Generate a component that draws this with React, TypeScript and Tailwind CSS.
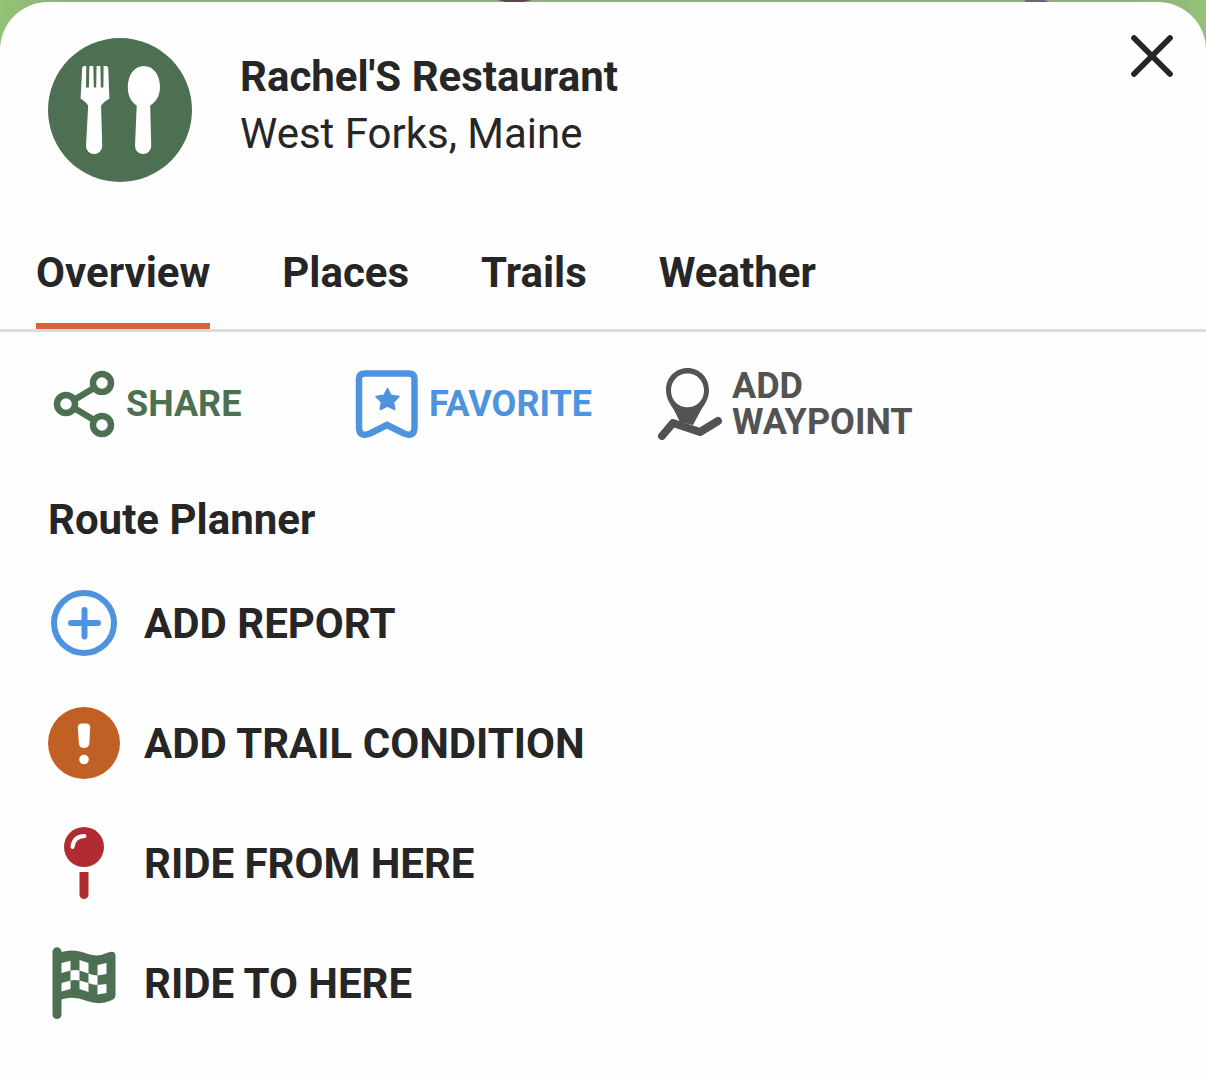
import React, { useState } from 'react';

const TABS = ['Overview', 'Places', 'Trails', 'Weather'];

const RestaurantIcon = () => (
  <svg viewBox="0 0 144 144" className="size-36 shrink-0" aria-hidden="true">
    <circle cx="72" cy="72" r="72" fill="#4c7051" />
    <g fill="#fff">
      <path d="M34.200 30Q34.500 28 36.200 28H58Q60 28 60.200 30L61.400 60.500Q55.500 64 53.100 67.500L54.200 108A8.100 8.100 0 0 1 38 108L40.200 67.500Q38 64 32.600 60.500Z" />
      <path d="M95.800 28C105.500 28 112 37 112 49C112 57.500 108 64 102.200 67.500L103.200 108A8.100 8.100 0 0 1 87 108L88.700 67.500C83 64 79.800 57.500 79.800 49C79.800 37 86.500 28 95.800 28Z" />
    </g>
    <path d="M38.300 27L38 49.500H40.900L41.400 27ZM45.300 27L45.800 49.500H48.200L48.600 27ZM52.400 27L52.800 49.500H55.400L55.600 27Z" fill="#4c7051" />
  </svg>
);

const ShareIcon = () => (
  <svg viewBox="0 0 72 72" className="size-18 shrink-0" fill="none" stroke="#4c7051" strokeWidth="6.500" aria-hidden="true">
    <path d="M26 32L46 20M26 40L46 52" />
    <circle cx="18" cy="36" r="9" />
    <circle cx="54" cy="15" r="9" />
    <circle cx="54" cy="57" r="9" />
  </svg>
);

const FavoriteIcon = () => (
  <svg viewBox="0 0 72 72" className="size-18 shrink-0" aria-hidden="true">
    <path d="M14 5.500H58Q63.500 5.500 63.500 11V60Q63 69.500 53 65.500L36 57L19 65.500Q8.500 69.500 8 60V11Q8 5.500 14 5.500Z" fill="none" stroke="#4e93dd" strokeWidth="6.500" />
    <path d="M36.500 20.500L40 27.300L48 28.500L42.500 34.200L43.800 41.500L36.500 38L29.200 41.500L30.500 34.200L25 28.500L33 27.300Z" fill="#4e93dd" stroke="#4e93dd" strokeWidth="1.500" strokeLinejoin="round" />
  </svg>
);

const WaypointIcon = () => (
  <svg viewBox="0 0 72 72" className="size-18 shrink-0" aria-hidden="true">
    <path fillRule="evenodd" d="M33.500 0C45.500 0 55 9.500 55 22C55 31 50.500 36.500 46.500 43L39 57L26 54L20.500 43C16.500 36.500 12 31 12 22C12 9.500 21.500 0 33.500 0ZM33.500 5.500C24 5.500 17 13 17 22.500C17 32 24 39.300 33.500 39.300C43 39.300 50 32 50 22.500C50 13 43 5.500 33.500 5.500Z" fill="#535353" />
    <path d="M8 68L19 55L46 64L64 53" fill="none" stroke="#535353" strokeWidth="8" strokeLinecap="round" strokeLinejoin="round" />
  </svg>
);

const AddReportIcon = () => (
  <svg viewBox="0 0 72 72" className="size-18 shrink-0" fill="none" stroke="#4e93dd" aria-hidden="true">
    <circle cx="36" cy="36" r="30" strokeWidth="6" />
    <path d="M23 36H50M36.500 23V49.500" strokeWidth="6" strokeLinecap="round" />
  </svg>
);

const TrailConditionIcon = () => (
  <svg viewBox="0 0 72 72" className="size-18 shrink-0" aria-hidden="true">
    <circle cx="36" cy="36" r="36" fill="#c06024" />
    <path d="M29.800 20.500Q30 16.500 34 16.500H38Q42.200 16.500 42.200 20.500L41.300 37Q40.500 41 36 41Q31.500 41 31 37Z" fill="#fff" />
    <circle cx="36" cy="52.500" r="4.800" fill="#fff" />
  </svg>
);

const RideFromIcon = () => (
  <svg viewBox="0 0 72 72" className="size-18 shrink-0" aria-hidden="true">
    <circle cx="36" cy="20" r="20" fill="#b02c30" />
    <path d="M24.500 20Q25.500 9.500 36.500 9" fill="none" stroke="#fff" strokeWidth="4" strokeLinecap="round" />
    <path d="M31.500 45H40.500V67.500A4.500 4.500 0 0 1 31.500 67.500Z" fill="#b02c30" />
  </svg>
);

const RideToIcon = () => (
  <svg viewBox="0 0 72 72" className="size-18 shrink-0" aria-hidden="true">
    <path d="M4.500 4.500A4.500 4.500 0 0 1 13.500 5Q26 1 40 7Q50 10.500 60 5.500Q67.500 3 67.500 9V48Q67.500 52 63 53.500Q52 58.500 39 54Q25 48.500 13.500 52.500V67.500A4.500 4.500 0 0 1 4.500 67.500Z" fill="#4c7051" />
    <g fill="#fff">
      <path d="M13.500 16L22.500 13.700V23.500L13.500 26Z" />
      <path d="M31.500 13L40.500 16V26.500L31.500 23.500Z" />
      <path d="M49.500 18L58.500 16V27L49.500 28.500Z" />
      <path d="M22.500 23.500Q27 22.500 31.500 23.500V33.500Q27 32.500 22.500 33.500Z" />
      <path d="M40.500 26.500Q45 28.500 49.500 28.500V38Q45 38 40.500 36Z" />
      <path d="M13.500 36L22.500 33.500V42L13.500 44.500Z" />
      <path d="M31.500 33.500L40.500 36V45L31.500 42Z" />
      <path d="M49.500 38L58.500 37V46L49.500 47.500Z" />
    </g>
  </svg>
);

const ROUTE_ACTIONS = [
  { label: 'ADD REPORT', Icon: AddReportIcon },
  { label: 'ADD TRAIL CONDITION', Icon: TrailConditionIcon },
  { label: 'RIDE FROM HERE', Icon: RideFromIcon },
  { label: 'RIDE TO HERE', Icon: RideToIcon },
];

const App: React.FC = () => {
  const [activeTab, setActiveTab] = useState('Overview');

  return (
    <div className="relative min-h-screen bg-[#94ad83] pt-0.5 font-['Roboto',sans-serif] text-[#262626] flex flex-col">
      {/* Map peeking out behind the sheet */}
      <div className="absolute inset-x-0 top-0 h-14 flex justify-between overflow-hidden">
        <div className="w-16 bg-linear-to-r from-[#92c474] to-[#94ad83]" />
        <svg viewBox="0 0 1000 4" className="h-1 flex-1" preserveAspectRatio="none" aria-hidden="true">
          <path d="M402 0H434L426 2H410Z" fill="#5d454b" />
          <path d="M891 0H910L914 2H892Z" fill="#6e6570" />
        </svg>
        <div className="w-16 bg-linear-to-l from-[#92c474] to-[#94ad83]" />
      </div>

      <main className="relative flex-1 bg-[#fefefe] rounded-t-[48px]">
        {/* Header */}
        <header className="flex items-start pl-12 pr-8 pt-9">
          <RestaurantIcon />
          <div className="flex-1 ml-12 mt-2.5 text-[42px] leading-[57px]">
            <h1 className="font-bold">Rachel'S Restaurant</h1>
            <p>West Forks, Maine</p>
          </div>
          <button type="button" aria-label="Close" className="-mt-1 cursor-pointer">
            <svg viewBox="0 0 44 44" className="size-11" fill="none" stroke="#262626" strokeWidth="5.700" strokeLinecap="round" aria-hidden="true">
              <path d="M4 4L40 40M40 4L4 40" />
            </svg>
          </button>
        </header>

        {/* Tabs */}
        <nav className="mt-10 px-9 flex gap-18 border-b-3 border-[#dcdcdc]">
          {TABS.map((tab) => (
            <button
              key={tab}
              type="button"
              onClick={() => setActiveTab(tab)}
              className={`pt-6 pb-6 text-[42px] leading-[53px] font-bold border-b-6 cursor-pointer ${activeTab === tab ? 'border-[#d9643a]' : 'border-transparent'}`}
            >
              {tab}
            </button>
          ))}
        </nav>

        {/* Quick actions */}
        <div className="pl-12 pt-9 grid grid-cols-[repeat(auto-fill,303px)] text-4xl leading-9 font-bold">
          <button type="button" className="flex items-center gap-1.5 text-left text-[#4c7051] cursor-pointer">
            <ShareIcon />
            SHARE
          </button>
          <button type="button" className="flex items-center gap-1.5 text-left text-[#4e93dd] cursor-pointer">
            <FavoriteIcon />
            FAVORITE
          </button>
          <button type="button" className="flex items-center gap-1.5 text-left text-[#535353] cursor-pointer">
            <WaypointIcon />
            ADD WAYPOINT
          </button>
        </div>

        {/* Route planner */}
        <section className="px-12 pt-12 pb-12 text-[42px] leading-[63px] font-bold">
          <h2>Route Planner</h2>
          <ul className="mt-9 flex flex-col gap-12">
            {ROUTE_ACTIONS.map(({ label, Icon }) => (
              <li key={label}>
                <button type="button" className="flex items-center gap-6 cursor-pointer">
                  <Icon />
                  {label}
                </button>
              </li>
            ))}
          </ul>
        </section>
      </main>
    </div>
  );
};

export default App;
